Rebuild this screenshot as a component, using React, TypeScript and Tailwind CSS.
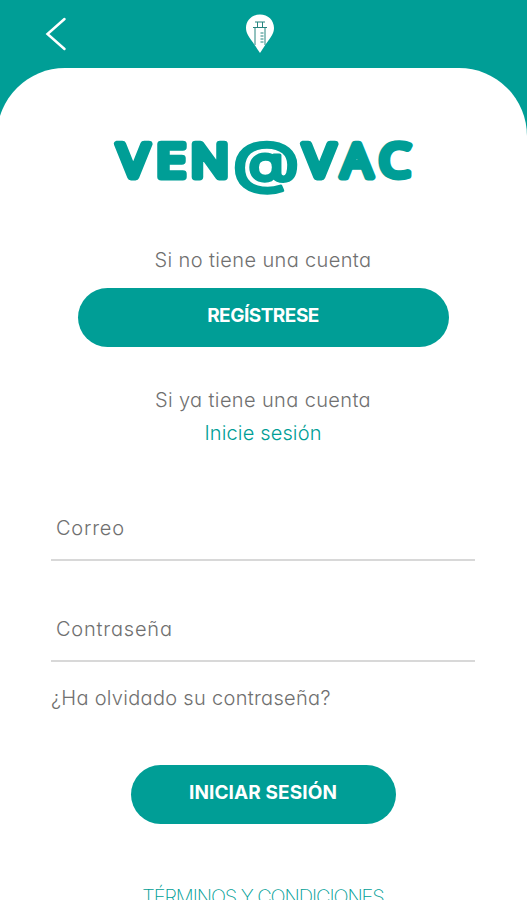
import type { ReactNode } from "react";

// ─── Logo ─────────────────────────────────────────────────────────────────────

const LOGO_PARTS = [
  { text: "V", x: 117.75, width: 31 },
  { text: "E", x: 156, width: 30 },
  { text: "N", x: 190.5, width: 38.5 },
  { text: "V", x: 303.75, width: 31 },
  { text: "A", x: 341.5, width: 30.5 },
  { text: "C", x: 379, width: 31.5 },
];

function Wordmark() {
  return (
    <svg
      viewBox="110 130 306 70"
      className="h-[70px] w-[306px] overflow-visible fill-[#009e96] stroke-[#009e96] font-['Open_Sans'] font-medium tracking-normal"
      strokeLinejoin="round"
      aria-label="VEN@VAC"
    >
      {LOGO_PARTS.map((part) => (
        <text
          key={part.x}
          x={part.x}
          y="177"
          fontSize="45.5"
          strokeWidth="6.75"
          textLength={part.width}
          lengthAdjust="spacingAndGlyphs"
        >
          {part.text}
        </text>
      ))}
      <text
        x="233"
        y="181.5"
        fontSize="56"
        strokeWidth="3.25"
        textLength="66"
        lengthAdjust="spacingAndGlyphs"
        className="font-['Inter'] font-medium"
      >
        @
      </text>
    </svg>
  );
}

function PinIcon() {
  return (
    <svg viewBox="0 0 30 40" className="h-10 w-[30px]" fill="none">
      <path d="M15 .5C7 .5 1 6.3 1 14c0 5.5 3.5 9.500 7 14.500C11 33 13 36 15 39c2-3 4-6 7-10.500C25.500 23.500 29 19.500 29 14 29 6.300 23 .5 15 .5Z" fill="#fff" />
      <g stroke="#27847f" strokeWidth="1">
        <path d="M10 8h10M8 13.500h14M12.500 8v5M17.500 8v5" />
        <path d="M10 14v17M20 14v17" />
        <path d="M15.500 19h3M15.500 22h3M15.500 25h3M15.500 28h3" strokeWidth="1" />
      </g>
    </svg>
  );
}

// ─── Form pieces ──────────────────────────────────────────────────────────────

function Field({ label, children }: { label: string; children?: ReactNode }) {
  return (
    <div className="h-[101px] w-[424px]">
      <div className="flex h-[50px] items-start border-b-2 border-[#d8d8d8] pl-[5px] leading-[34px]">
        <span className="tracking-[0.8px]">{label}</span>
        {children}
      </div>
    </div>
  );
}

export default function App() {
  return (
    <div className="h-[900px] w-full overflow-hidden bg-white font-['Inter',sans-serif] text-[20px] font-light tracking-[0.37px] text-[#707070] [font-feature-settings:'cv11']">
      <div className="h-[138px] overflow-hidden bg-[#009e96]">
        <header className="grid h-[68px] grid-cols-3 items-center">
          <svg viewBox="0 0 22 34" className="ml-[45px] h-[34px] w-[22px]" fill="none" stroke="#fff" strokeWidth="2.5" strokeLinecap="round">
            <path d="M19.500 2 2.500 17l17 15" />
          </svg>
          <div className="flex justify-center pr-[6px]">
            <PinIcon />
          </div>
        </header>
        <div className="-ml-[3px] h-[70px] rounded-t-[68px] bg-white" />
      </div>

      <main className="-mt-2 flex flex-col items-center pr-[1px]">
        <Wordmark />

        <p className="mt-[42px] h-[46px] leading-[36px]">Si no tiene una cuenta</p>
        <button className="h-[59px] w-[371px] rounded-full bg-[#009e96] pb-[3px] text-[19px] font-bold tracking-[-0.5px] text-white">
          REGÍSTRESE
        </button>

        <p className="mt-[36px] h-[33px] leading-[34px]">Si ya tiene una cuenta</p>
        <a className="h-[33px] leading-[34px] tracking-[0.15px] text-[#009e96]">Inicie sesión</a>

        <form className="mt-[62px] flex flex-col items-center">
          <Field label="Correo" />
          <Field label="Contraseña" />
          <a className="-mt-[32px] self-start leading-[34px] tracking-[0.3px]">¿Ha olvidado su contraseña?</a>
          <button type="button" className="mt-[50px] h-[59px] w-[265px] rounded-full bg-[#009e96] pb-[3px] text-[19px] font-bold tracking-[0.1px] text-white">
            INICIAR SESIÓN
          </button>
        </form>

        <a className="mt-[56px] leading-[34px] font-[250] tracking-[-1.1px] text-[#009e96]">TÉRMINOS Y CONDICIONES</a>
      </main>
    </div>
  );
}
